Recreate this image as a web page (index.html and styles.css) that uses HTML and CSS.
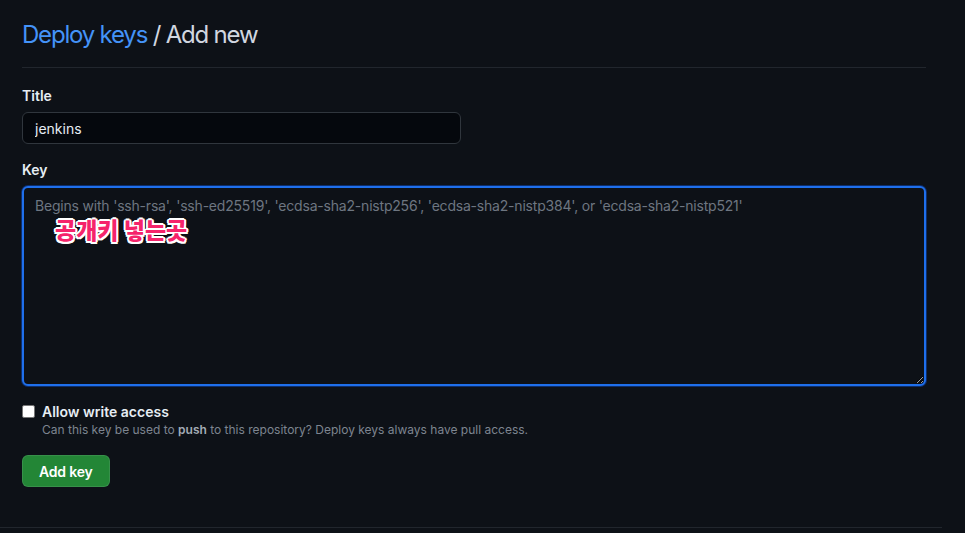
FILE: index.html
```html
<!DOCTYPE html>
<html>
<head>
<meta charset="utf-8">
<link rel="stylesheet" href="styles.css">
</head>
<body>
<div class="page">
  <div class="content">
    <h2 class="heading"><a class="crumb" href="#">Deploy keys</a> / Add new</h2>
    <form class="form">
      <div class="group">
        <label class="label">Title</label>
        <input class="input" type="text" value="jenkins">
      </div>
      <div class="group key-group">
        <label class="label">Key</label>
        <div class="textarea-wrap">
          <textarea class="textarea" placeholder="Begins with 'ssh-rsa', 'ssh-ed25519', 'ecdsa-sha2-nistp256', 'ecdsa-sha2-nistp384', or 'ecdsa-sha2-nistp521'"></textarea>
          <span class="annotation">공개키 넣는곳</span>
        </div>
      </div>
      <div class="check-row">
        <input class="checkbox" type="checkbox">
        <div class="check-text">
          <div class="check-label">Allow write access</div>
          <div class="check-note">Can this key be used to <strong>push</strong> to this repository? Deploy keys always have pull access.</div>
        </div>
      </div>
      <button class="btn" type="button">Add key</button>
    </form>
  </div>
  <div class="bottom-line"></div>
</div>
</body>
</html>
```
FILE: styles.css
```css
html, body {
  margin: 0;
  padding: 0;
  background: #0d1117;
  height: 100%;
  overflow: hidden;
}
body {
  font-family: Inter, "Liberation Sans", "Noto Sans CJK KR", sans-serif;
  color: #e6edf3;
}
.page {
  width: 942px;
}
.content {
  padding: 0 16px 0 22px;
  width: 904px;
}
.heading {
  margin: 0;
  padding: 20px 0 17px;
  font-size: 24px;
  font-weight: 400;
  line-height: 30px;
  color: #d1d7e0;
  border-bottom: 1px solid #21262d;
  letter-spacing: -1.2px;
}
.crumb {
  color: #4493f8;
  text-decoration: none;
}
.form {
  padding-top: 19px;
}
.group {
  display: flex;
  flex-direction: column;
}
.label {
  font-size: 14px;
  font-weight: 600;
  line-height: 18px;
  margin-bottom: 7px;
}
.input {
  width: 439px;
  height: 32px;
  box-sizing: border-box;
  background: #05080d;
  border: 1px solid #30363d;
  border-radius: 6px;
  color: #e6edf3;
  font-family: inherit;
  font-size: 14px;
  padding: 0 12px;
  outline: none;
}
.key-group {
  margin-top: 17px;
}
.key-group .label {
  margin-bottom: 7px;
}
.textarea-wrap {
  position: relative;
}
.textarea {
  display: block;
  width: 904px;
  height: 200px;
  box-sizing: border-box;
  background: #0d1117;
  border: 2px solid #1f6feb;
  box-shadow: 0 0 0 1px #0c2d6b;
  border-radius: 6px;
  color: #e6edf3;
  font-family: inherit;
  font-size: 14px;
  line-height: 20px;
  padding: 8px 11px;
  outline: none;
  resize: vertical;
  letter-spacing: -0.2px;
}
.textarea::placeholder {
  color: #6e7681;
}
.annotation {
  position: absolute;
  left: 33px;
  top: 29px;
  font-family: "Noto Sans CJK KR", sans-serif;
  font-weight: 900;
  font-size: 23px;
  line-height: 28px;
  color: #f5246b;
  text-shadow:
    2px 0 0 #fff, -2px 0 0 #fff, 0 2px 0 #fff, 0 -2px 0 #fff,
    1.5px 1.5px 0 #fff, -1.5px 1.5px 0 #fff, 1.5px -1.5px 0 #fff, -1.5px -1.5px 0 #fff;
}
.check-row {
  display: flex;
  align-items: flex-start;
  margin-top: 17px;
}
.checkbox {
  appearance: none;
  -webkit-appearance: none;
  width: 13px;
  height: 13px;
  margin: 2px 7px 0 0;
  background: #fff;
  border: 1px solid #767676;
  border-radius: 2px;
  box-sizing: border-box;
}
.check-label {
  font-size: 14px;
  font-weight: 600;
  line-height: 18px;
}
.check-note {
  font-size: 12px;
  line-height: 18px;
  color: #7d8590;
}
.check-note strong {
  color: #a3acb6;
  font-weight: 600;
}
.btn {
  margin-top: 16px;
  height: 32px;
  padding: 0 16px;
  background: #238636;
  border: 1px solid rgba(240,246,252,0.1);
  border-radius: 6px;
  color: #fff;
  font-family: inherit;
  font-size: 14px;
  font-weight: 600;
  letter-spacing: -0.2px;
}
.bottom-line {
  margin-top: 40px;
  height: 1px;
  background: #21262d;
}
```
